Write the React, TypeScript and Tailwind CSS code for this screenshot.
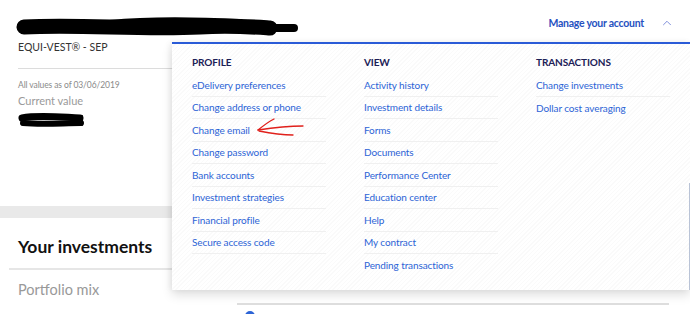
import { ChevronUp } from "lucide-react"

const PROFILE = [
  "eDelivery preferences",
  "Change address or phone",
  "Change email",
  "Change password",
  "Bank accounts",
  "Investment strategies",
  "Financial profile",
  "Secure access code",
]

const VIEW = [
  "Activity history",
  "Investment details",
  "Forms",
  "Documents",
  "Performance Center",
  "Education center",
  "Help",
  "My contract",
  "Pending transactions",
]

const TRANSACTIONS = ["Change investments", "Dollar cost averaging"]

function MenuColumn({ title, items, lastBorder }: { title: string; items: string[]; lastBorder?: boolean }) {
  return (
    <div className="w-[172px] shrink-0">
      <h3 className="text-[10px] leading-[14px] font-bold tracking-[-0.1px] text-[#1b2056]">{title}</h3>
      <ul className="mt-[5px] w-[134px]">
        {items.map((item, i) => (
          <li
            key={item}
            className={
              i < items.length - 1 || lastBorder
                ? "h-[22.5px] flex items-center border-b border-[#f0f0f0]"
                : "h-[22.5px] flex items-center"
            }
          >
            <a className="text-[10px] leading-[14px] tracking-[-0.1px] text-[#2c64d6] whitespace-nowrap cursor-pointer">{item}</a>
          </li>
        ))}
      </ul>
    </div>
  )
}

// redaction marks drawn over the account name / balance
function TopScribble() {
  return (
    <svg width="300" height="38" viewBox="0 0 300 38" className="block">
      <path d="M24 27 C80 24 140 30 200 27 C230 25 255 27 270 28" stroke="#000" strokeWidth="15" fill="none" strokeLinecap="round" />
      <path d="M266 28 L294 28" stroke="#000" strokeWidth="8" fill="none" strokeLinecap="round" />
      <path d="M110 24 C150 20 200 21 240 23" stroke="#000" strokeWidth="8" fill="none" strokeLinecap="round" />
    </svg>
  )
}

function SmallScribble() {
  return (
    <svg width="68" height="16" viewBox="0 0 68 16" className="block">
      <path d="M4 6 C20 3 40 5 62 6" stroke="#000" strokeWidth="7" fill="none" strokeLinecap="round" />
      <path d="M5 11 C25 13 45 11 63 11" stroke="#000" strokeWidth="6" fill="none" strokeLinecap="round" />
      <path d="M64 4 L64 13" stroke="#000" strokeWidth="2" fill="none" strokeLinecap="round" />
    </svg>
  )
}

function RedArrow() {
  return (
    <svg width="50" height="24" viewBox="0 0 50 24" className="absolute left-[257px] top-[116px]" fill="none">
      <path d="M1 14 C6 10 11 6 17 3" stroke="#e0201b" strokeWidth="1.3" strokeLinecap="round" />
      <path d="M1 14 C14 12 30 10 46 10" stroke="#e0201b" strokeWidth="1.3" strokeLinecap="round" />
      <path d="M2 15 C12 17 24 19 36 19" stroke="#e0201b" strokeWidth="1.3" strokeLinecap="round" />
    </svg>
  )
}

export default function App() {
  return (
    <div className="relative w-[690px] h-[314px] overflow-hidden bg-white font-['Lato',sans-serif]">
      <header className="flex h-[38px] items-start justify-between">
        <TopScribble />
        <button className="mt-[16px] mr-[16px] flex items-center gap-[16px] text-[10.5px] leading-[14px] font-bold tracking-[-0.25px] text-[#2651bf]">
          Manage your account
          <ChevronUp className="size-[14px] text-[#6f80d6]" strokeWidth={1.5} />
        </button>
      </header>

      <section className="pl-[18px]">
        <p className="mt-[2px] text-[10.5px] leading-[14px] text-[#333]">EQUI-VEST® - SEP</p>
        <div className="mt-[14px] h-px w-[400px] bg-[#dcdcdc]" />
        <p className="mt-[10px] text-[8.5px] leading-[12px] tracking-[-0.1px] text-[#8a8a8a]">All values as of 03/06/2019</p>
        <p className="mt-[2px] text-[11px] leading-[16px] text-[#9a9a9a]">Current value</p>
        <div className="mt-[3px]">
          <SmallScribble />
        </div>
      </section>

      <div className="mt-[78px] h-[12px] bg-[#e9e9e9]" />

      <div className="flex">
        <div className="w-[228px] shrink-0 pl-[9px]">
          <h2 className="mt-[17px] pl-[9px] text-[17.5px] leading-[24px] font-bold text-[#111]">Your investments</h2>
          <div className="mt-[9px] h-[2px] bg-[#e6e6e6]" />
          <p className="mt-[10px] pl-[9px] text-[14.5px] leading-[20px] text-[#999]">Portfolio mix</p>
        </div>
        <div className="flex-1 ml-[9px] mr-[21px]">
          <div className="mt-[85px] h-[2px] bg-[#dedede]" />
          <div className="mt-[6px] flex items-center gap-[6px] pl-[8px]">
            <span className="size-[10px] rounded-full bg-[#2c64d6]" />
          </div>
        </div>
      </div>

      {/* Manage your account dropdown */}
      <div className="absolute left-[172px] top-[42px] right-0 h-[248px] border-t-2 border-[#2a5bd7] bg-white bg-[repeating-linear-gradient(135deg,#ffffff_0px,#ffffff_2px,#fafafa_2px,#fafafa_3px)] shadow-[0_5px_10px_rgba(0,0,0,0.13),-2px_0_6px_rgba(0,0,0,0.05)]">
        <div className="flex pl-[20px] pt-[11px]">
          <MenuColumn title="PROFILE" items={PROFILE} lastBorder />
          <MenuColumn title="VIEW" items={VIEW} />
          <MenuColumn title="TRANSACTIONS" items={TRANSACTIONS} />
        </div>
        <div className="absolute right-0 top-[139px] bottom-0 w-px bg-[#b9c3d6]" />
      </div>

      <RedArrow />
    </div>
  )
}
